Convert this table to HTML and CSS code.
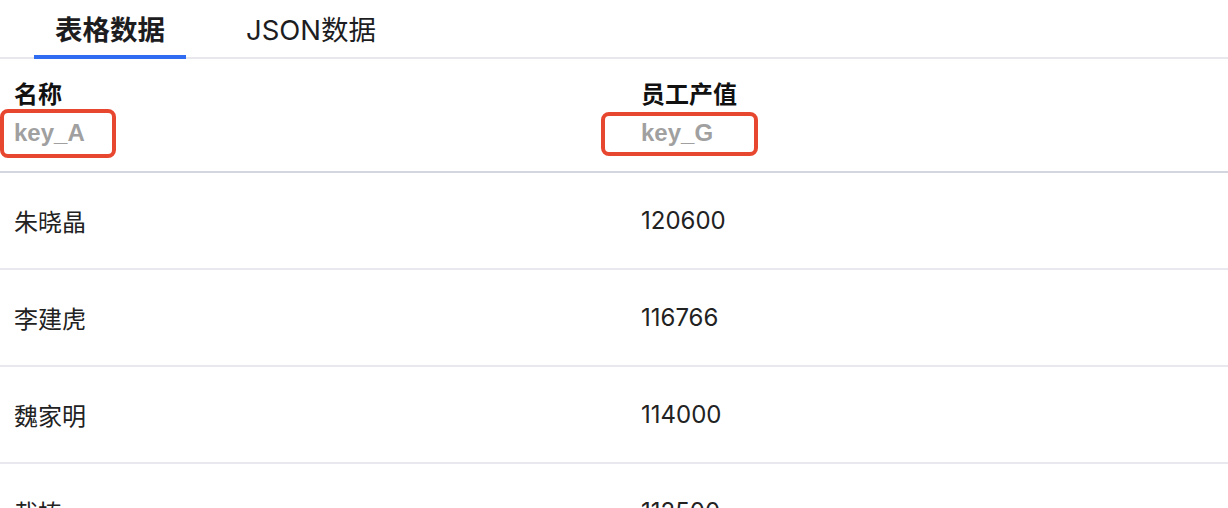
FILE: index.html
```html
<!DOCTYPE html>
<html lang="zh-CN">
<head>
<meta charset="utf-8">
<title>数据</title>
<link rel="stylesheet" href="styles.css">
</head>
<body>
<div class="tabs">
  <div class="tab active">表格数据</div>
  <div class="tab">JSON数据</div>
</div>
<table class="grid">
  <colgroup><col class="c1"><col></colgroup>
  <thead>
    <tr>
      <th class="h1"><div class="title">名称</div><div class="key">key_A</div><span class="mark mark-a"></span></th>
      <th class="h2"><div class="title">员工产值</div><div class="key">key_G</div><span class="mark mark-g"></span></th>
    </tr>
  </thead>
  <tbody>
    <tr><td>朱晓晶</td><td>120600</td></tr>
    <tr><td>李建虎</td><td>116766</td></tr>
    <tr><td>魏家明</td><td>114000</td></tr>
    <tr><td>栽植</td><td>112500</td></tr>
  </tbody>
</table>
</body>
</html>
```
FILE: styles.css
```css
html, body {
  margin: 0;
  padding: 0;
  background: #ffffff;
  overflow: hidden;
}
body {
  font-family: Inter, "Noto Sans CJK SC", sans-serif;
  color: #1d1d1f;
  width: 1228px;
  height: 508px;
}
.tabs {
  display: flex;
  height: 59px;
  padding-left: 34px;
  gap: 39px;
  box-shadow: inset 0 -2px 0 #e8e8ec;
  box-sizing: border-box;
}
.tab {
  box-sizing: border-box;
  height: 59px;
  padding: 10px 21px 0;
  font-size: 27.5px;
  line-height: 40px;
  color: #1d1d1f;
  border-bottom: 4px solid transparent;
}
.tab.active {
  font-weight: 600;
  border-bottom-color: #2f6cf2;
}
.grid {
  width: 100%;
  border-collapse: collapse;
  table-layout: fixed;
}
.c1 { width: 627px; }
th {
  position: relative;
  text-align: left;
  padding: 20px 14px 22px;
  border-bottom: 2px solid #d3d6de;
  font-weight: 600;
}
.title {
  font-size: 24px;
  line-height: 32px;
  color: #111;
}
.key {
  margin-top: 6px;
  font-family: "Liberation Sans", "Noto Sans CJK SC", sans-serif;
  font-weight: 700;
  font-size: 24px;
  line-height: 32px;
  color: #a0a0a0;
}
.mark {
  position: absolute;
  border: 4px solid #e8472f;
  border-radius: 8px;
  box-sizing: border-box;
}
.mark-a { left: 0; top: 50px; width: 116px; height: 49px; }
.mark-g { left: -26px; top: 53px; width: 157px; height: 44px; }
td {
  height: 95px;
  padding: 0 14px;
  font-size: 24px;
  color: #222;
  border-bottom: 2px solid #e8e8ee;
  vertical-align: middle;
}
```
